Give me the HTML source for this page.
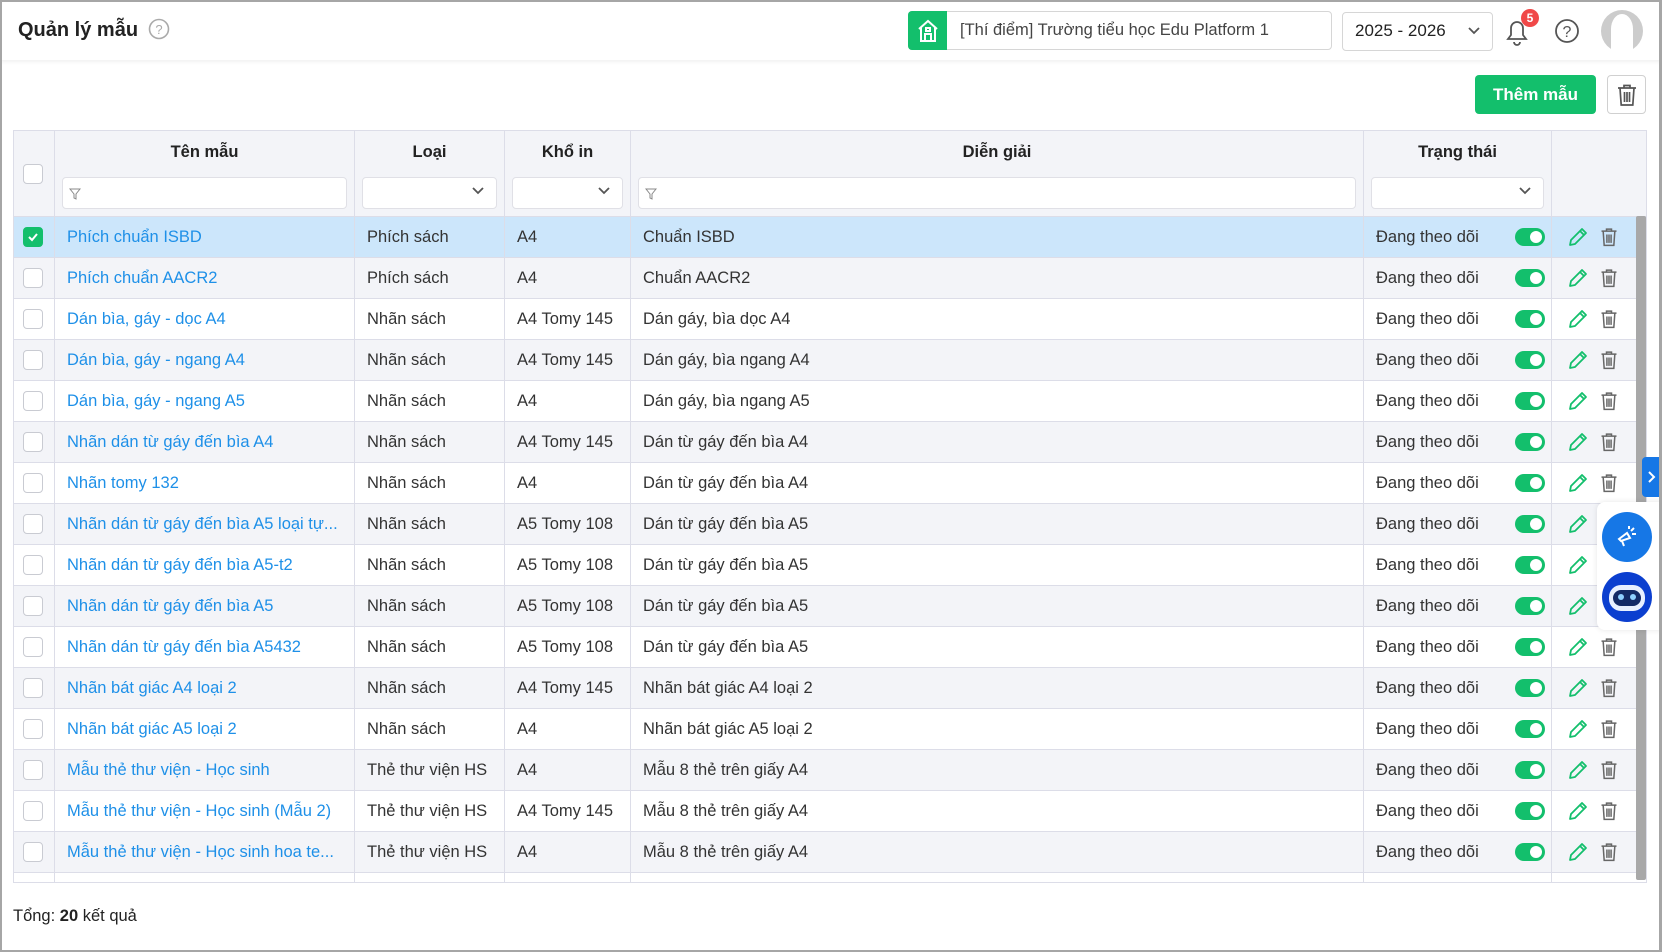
<!DOCTYPE html>
<html><head><meta charset="utf-8">
<style>
*{box-sizing:border-box;margin:0;padding:0}
body{width:1662px;height:952px;overflow:hidden;background:#fff;font-family:"Liberation Sans",sans-serif;color:#333;position:relative}
.frame{position:absolute;inset:0;border:2px solid #a6a6a6;border-right-width:3px;pointer-events:none;z-index:50}
.hdr{position:absolute;left:0;top:0;width:1662px;height:60px;background:#fff;box-shadow:0 2px 4px rgba(0,0,0,.06)}
.title{position:absolute;left:18px;top:19px;font-size:20px;font-weight:bold;color:#222}
.abs{position:absolute}
table{position:absolute;left:13px;top:130px;border-collapse:collapse;table-layout:fixed;font-size:16.5px}
td,th{border:1px solid #dcdde8;height:41px;padding:0 12px;white-space:nowrap;overflow:hidden}
th{background:#f3f4f8;font-weight:bold;color:#222;height:86px;vertical-align:top;padding:0 7px}
th .t{margin-top:12px;text-align:center;height:20px}
th .f{margin-top:14px;height:32px;border:1px solid #e0e0e6;border-radius:4px;background:#fff;position:relative}
tr.g td{background:#f3f4f8}
tr.s td{background:#cce6fb}
tr.e td{height:10px;line-height:0;font-size:0}
td.l{color:#1e90e8}
.cb{width:20px;height:20px;border:1px solid #c9cbd2;border-radius:4px;background:#fff;margin-left:-2px}
.cb.on{background:#13bf6c;border-color:#13bf6c}
.st{display:flex;justify-content:space-between;align-items:center}
.tg{display:inline-block;width:30px;height:18px;border-radius:9px;background:#13bf6c;position:relative}
.tg:after{content:"";position:absolute;right:3px;top:3px;width:12px;height:12px;border-radius:50%;background:#fff}
.chev{position:absolute;right:12px;top:9px}
</style></head><body>
<div class="hdr">
 <div class="title">Quản lý mẫu</div>
 <svg class="abs" style="left:148px;top:18px" width="22" height="22" viewBox="0 0 22 22"><circle cx="11" cy="11" r="9.5" fill="none" stroke="#aaa" stroke-width="1.6"/><text x="11" y="16" font-size="13" text-anchor="middle" fill="#aaa" font-family="Liberation Sans">?</text></svg>
 <div class="abs" style="left:908px;top:11px;width:424px;height:39px;border:1px solid #d6d6d6;border-radius:4px"></div>
 <div class="abs" style="left:908px;top:11px;width:39px;height:39px;background:#13bf6c;border-radius:4px 0 0 4px"></div>
 <svg class="abs" style="left:916px;top:18px" width="24" height="25" viewBox="0 0 24 25"><path d="M3 11L12 3l9 8M5 9v14h14V9M9 23v-7h6v7M10 10h4v3h-4z" fill="none" stroke="#fff" stroke-width="2"/></svg>
 <div class="abs" style="left:960px;top:21px;font-size:16.5px;color:#444">[Thí điểm] Trường tiểu học Edu Platform 1</div>
 <div class="abs" style="left:1342px;top:12px;width:151px;height:39px;border:1px solid #d6d6d6;border-radius:4px"></div>
 <div class="abs" style="left:1355px;top:21px;font-size:17px;color:#222">2025 - 2026</div>
 <svg class="abs" style="left:1468px;top:27px" width="12" height="8"><path d="M1 1l5 5 5-5" fill="none" stroke="#555" stroke-width="1.8"/></svg>
 <svg class="abs" style="left:1503px;top:17px" width="28" height="30" viewBox="0 0 28 30"><path d="M5 22h18l-3-4v-7a6 6 0 0 0-12 0v7z M11 25a3 3 0 0 0 6 0" fill="none" stroke="#555" stroke-width="1.8"/></svg>
 <div class="abs" style="left:1521px;top:9px;width:18px;height:18px;border-radius:50%;background:#f04848;color:#fff;font-size:12px;font-weight:bold;text-align:center;line-height:18px">5</div>
 <svg class="abs" style="left:1554px;top:18px" width="26" height="26"><circle cx="13" cy="13" r="11" fill="none" stroke="#555" stroke-width="1.8"/><text x="13" y="19" font-size="16" text-anchor="middle" fill="#555" font-family="Liberation Sans">?</text></svg>
 <svg class="abs" style="left:1600px;top:9px" width="44" height="44"><circle cx="22" cy="22" r="21" fill="#ccc"/><ellipse cx="22" cy="20" rx="11" ry="15" fill="#fff"/><rect x="11" y="20" width="22" height="24" fill="#fff"/></svg>
</div>
<div class="abs" style="left:1475px;top:75px;width:121px;height:39px;background:#13bf6c;border-radius:4px;color:#fff;font-weight:bold;font-size:17px;text-align:center;line-height:39px">Thêm mẫu</div>
<div class="abs" style="left:1607px;top:75px;width:39px;height:39px;border:1px solid #d0d0d0;border-radius:4px"></div>
<svg class="abs" style="left:1615px;top:83px" width="24" height="24" viewBox="0 0 24 24"><path d="M3 5h18M9 5V2.5h6V5M5 5l1.2 17h11.6L19 5M9.5 9v10M12 9v10M14.5 9v10" fill="none" stroke="#555" stroke-width="1.7"/></svg>

<table>
<colgroup><col style="width:41px"><col style="width:300px"><col style="width:150px"><col style="width:126px"><col style="width:733px"><col style="width:188px"><col style="width:95px"></colgroup>
<tr>
<th style="vertical-align:middle;padding:0 11px"><div class="cb" style="margin-top:0"></div></th>
<th><div class="t">Tên mẫu</div><div class="f"><svg class="abs" style="left:6px;top:10px" width="12" height="12"><path d="M1 1h10L7 6v5L5 10V6z" fill="none" stroke="#888"/></svg></div></th>
<th><div class="t">Loại</div><div class="f"><svg class="chev" width="12" height="8"><path d="M1 1l5 5 5-5" fill="none" stroke="#555" stroke-width="1.8"/></svg></div></th>
<th><div class="t">Khổ in</div><div class="f"><svg class="chev" width="12" height="8"><path d="M1 1l5 5 5-5" fill="none" stroke="#555" stroke-width="1.8"/></svg></div></th>
<th><div class="t">Diễn giải</div><div class="f"><svg class="abs" style="left:6px;top:10px" width="12" height="12"><path d="M1 1h10L7 6v5L5 10V6z" fill="none" stroke="#888"/></svg></div></th>
<th><div class="t">Trạng thái</div><div class="f"><svg class="chev" width="12" height="8"><path d="M1 1l5 5 5-5" fill="none" stroke="#555" stroke-width="1.8"/></svg></div></th>
<th></th>
</tr>
<tbody id="b"></tbody>
</table>
<script>
var d=[["Phích chuẩn ISBD","Phích sách","A4","Chuẩn ISBD"],["Phích chuẩn AACR2","Phích sách","A4","Chuẩn AACR2"],["Dán bìa, gáy - dọc A4","Nhãn sách","A4 Tomy 145","Dán gáy, bìa dọc A4"],["Dán bìa, gáy - ngang A4","Nhãn sách","A4 Tomy 145","Dán gáy, bìa ngang A4"],["Dán bìa, gáy - ngang A5","Nhãn sách","A4","Dán gáy, bìa ngang A5"],["Nhãn dán từ gáy đến bìa A4","Nhãn sách","A4 Tomy 145","Dán từ gáy đến bìa A4"],["Nhãn tomy 132","Nhãn sách","A4","Dán từ gáy đến bìa A4"],["Nhãn dán từ gáy đến bìa A5 loại tự...","Nhãn sách","A5 Tomy 108","Dán từ gáy đến bìa A5"],["Nhãn dán từ gáy đến bìa A5-t2","Nhãn sách","A5 Tomy 108","Dán từ gáy đến bìa A5"],["Nhãn dán từ gáy đến bìa A5","Nhãn sách","A5 Tomy 108","Dán từ gáy đến bìa A5"],["Nhãn dán từ gáy đến bìa A5432","Nhãn sách","A5 Tomy 108","Dán từ gáy đến bìa A5"],["Nhãn bát giác A4 loại 2","Nhãn sách","A4 Tomy 145","Nhãn bát giác A4 loại 2"],["Nhãn bát giác A5 loại 2","Nhãn sách","A4","Nhãn bát giác A5 loại 2"],["Mẫu thẻ thư viện - Học sinh","Thẻ thư viện HS","A4","Mẫu 8 thẻ trên giấy A4"],["Mẫu thẻ thư viện - Học sinh (Mẫu 2)","Thẻ thư viện HS","A4 Tomy 145","Mẫu 8 thẻ trên giấy A4"],["Mẫu thẻ thư viện - Học sinh hoa te...","Thẻ thư viện HS","A4","Mẫu 8 thẻ trên giấy A4"]];
var pen='<svg width="22" height="22" viewBox="0 0 22 22" style="vertical-align:middle"><path d="M3 19l1-5L15 3l4 4L8 18zM13 5l4 4" fill="none" stroke="#13bf6c" stroke-width="1.8" stroke-linejoin="round"/></svg>';
var tr='<svg width="20" height="20" viewBox="0 0 24 24" style="vertical-align:middle;margin-left:10px"><path d="M3 5h18M9 5V2.5h6V5M5 5l1.2 17h11.6L19 5M9.5 9v10M12 9v10M14.5 9v10" fill="none" stroke="#666" stroke-width="1.8"/></svg>';
var h='';
d.forEach(function(r,i){var c=i==0?'s':(i%2?'g':'');h+='<tr class="'+c+'"><td style="padding:0 11px"><div class="cb'+(i==0?' on':'')+'">'+(i==0?'<svg width="18" height="18"><path d="M5 9l3 3 5-6" fill="none" stroke="#fff" stroke-width="2"/></svg>':'')+'</div></td><td class="l">'+r[0]+'</td><td>'+r[1]+'</td><td>'+r[2]+'</td><td>'+r[3]+'</td><td style="padding:0 6px 0 12px"><div class="st">Đang theo dõi<span class="tg"></span></div></td><td style="padding:0 0 0 15px">'+pen+tr+'</td></tr>';});
h+='<tr class="e"><td></td><td></td><td></td><td></td><td></td><td></td><td></td></tr>';
document.getElementById('b').innerHTML=h;
</script>
<div class="abs" style="left:1636px;top:216px;width:10px;height:664px;background:#a8a8a8;border-radius:2px"></div>
<div class="abs" style="left:13px;top:907px;font-size:16.5px;color:#222">Tổng: <b>20</b> kết quả</div>
<div class="abs" style="left:1642px;top:457px;width:20px;height:40px;background:#1677e6;border-radius:4px 0 0 4px"></div>
<svg class="abs" style="left:1647px;top:470px" width="10" height="14"><path d="M2 2l5 5-5 5" fill="none" stroke="#fff" stroke-width="2"/></svg>
<div class="abs" style="left:1597px;top:502px;width:65px;height:128px;background:#fff;border-radius:8px 0 0 8px;box-shadow:0 0 6px rgba(0,0,0,.1)"></div>
<div class="abs" style="left:1602px;top:512px;width:50px;height:50px;border-radius:50%;background:#1677e6"></div>
<svg class="abs" style="left:1615px;top:525px" width="24" height="24" viewBox="0 0 24 24"><path d="M4 14l8-6 3 5-9 3zM7 16l2 5M16 6l3-3M17 9h4M14 4V1" fill="none" stroke="#fff" stroke-width="2"/></svg>
<div class="abs" style="left:1602px;top:572px;width:50px;height:50px;border-radius:50%;background:#0b3fcf"></div>
<div class="abs" style="left:1609px;top:585px;width:36px;height:26px;border-radius:12px;background:#e8f0ff"></div>
<div class="abs" style="left:1613px;top:590px;width:28px;height:16px;border-radius:8px;background:#132a66"></div>
<div class="abs" style="left:1618px;top:594px;width:6px;height:6px;border-radius:50%;background:#8fd0ff"></div>
<div class="abs" style="left:1630px;top:594px;width:6px;height:6px;border-radius:50%;background:#8fd0ff"></div>
<div class="frame"></div>
</body></html>
